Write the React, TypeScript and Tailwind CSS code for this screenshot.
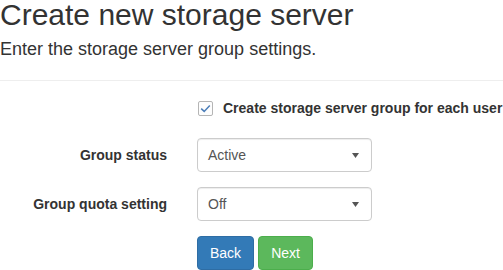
import React from 'react';

function SelectBox({ value }: { value: string }) {
    return (
        <div className="flex h-[34px] w-[175px] items-center justify-between rounded-[4px] border border-[#ccc] bg-white pl-[10px] pr-[12px] shadow-[inset_0_1px_1px_rgba(0,0,0,0.075)]">
            <span className="text-[14px] text-[#555]">{value}</span>
            <svg width="7" height="5" viewBox="0 0 7 5">
                <path d="M0 0 L7 0 L3.5 5 Z" fill="#555" />
            </svg>
        </div>
    );
}

export default function App() {
    return (
        <div className="h-[270px] w-[503px] overflow-hidden bg-white text-[#333]" style={{ fontFamily: '"Liberation Sans", Arial, sans-serif' }}>
            <div className="h-[80px]">
                <h1 className="text-[30px] leading-[30px] font-normal">Create new storage server</h1>
                <p className="mt-[6px] text-[18px] leading-[26px]">Enter the storage server group settings.</p>
            </div>
            <div className="border-t border-[#eee]" />

            <form className="flex flex-col">
                {/* checkbox row */}
                <div className="mt-[17px] flex h-[20px] items-center pl-[198px]">
                    <div className="flex h-[15px] w-[15px] items-center justify-center rounded-[2px] border border-[#b5b5b5] bg-[#fdfdfd]">
                        <svg width="11" height="9" viewBox="0 0 11 9">
                            <path d="M1.2 4.6 L4.2 7.4 L9.8 1.4" fill="none" stroke="#4a7db8" strokeWidth="1.5" />
                        </svg>
                    </div>
                    <span className="ml-[10px] whitespace-nowrap text-[14px] font-bold">Create storage server group for each user</span>
                </div>

                <div className="mt-[20px] flex items-center">
                    <label className="w-[167px] text-right text-[14px] font-bold">Group status</label>
                    <div className="ml-[30px]">
                        <SelectBox value="Active" />
                    </div>
                </div>

                <div className="mt-[15px] flex items-center">
                    <label className="w-[167px] text-right text-[14px] font-bold">Group quota setting</label>
                    <div className="ml-[30px]">
                        <SelectBox value="Off" />
                    </div>
                </div>

                <div className="mt-[15px] flex gap-[4px] pl-[197px]">
                    <button type="button" className="h-[34px] rounded-[4px] border border-[#2e6da4] bg-[#337ab7] px-[12px] text-[14px] text-white">
                        Back
                    </button>
                    <button type="button" className="h-[34px] rounded-[4px] border border-[#4cae4c] bg-[#5cb85c] px-[12px] text-[14px] text-white">
                        Next
                    </button>
                </div>
            </form>
        </div>
    );
}
